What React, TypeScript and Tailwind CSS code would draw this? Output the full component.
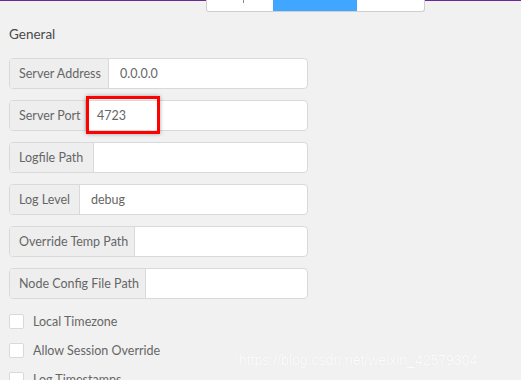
import React from "react";

const rows: { label: string; w: string; value: string }[] = [
  { label: "Server Address", w: "w-[99px]", value: "0.0.0.0" },
  { label: "Server Port", w: "w-[76px]", value: "4723" },
  { label: "Logfile Path", w: "w-[84px]", value: "" },
  { label: "Log Level", w: "w-[70px]", value: "debug" },
  { label: "Override Temp Path", w: "w-[125px]", value: "" },
  { label: "Node Config File Path", w: "w-[136px]", value: "" },
];

const checks = ["Local Timezone", "Allow Session Override", "Log Timestamps"];

export default function App() {
  return (
    <div
      className="relative w-[521px] h-[380px] overflow-hidden bg-[#f1f1f1] text-[#555]"
      style={{ fontFamily: 'Lato, "Open Sans", sans-serif' }}
    >
      <div className="flex h-[12px]">
        <div className="w-[206px] border-t border-[#6b2b96]" />
        <div className="flex w-[219px] h-[12px] bg-white border border-t-0 border-[#cfcfcf] rounded-b-[3px] overflow-hidden">
          <div className="relative w-[66px]">
            <div className="absolute left-[36px] top-0 w-px h-[3px] bg-[#888]" />
          </div>
          <div className="w-[84px] bg-[#41a6ff]" />
          <div className="flex-1" />
        </div>
        <div className="flex-1 border-t border-[#6b2b96]" />
      </div>

      <div className="pl-[9px]">
        <div className="mt-[12px] h-[18px] leading-[18px] pt-[1px] text-[13.5px] text-[#4a4a4a]">General</div>
        <div className="mt-[16px] flex flex-col gap-[11px]">
          {rows.map((r) => (
            <div
              key={r.label}
              className="flex w-[299px] h-[31px] rounded-[4px] border border-[#d9d9d9] bg-white overflow-hidden text-[12.5px]"
            >
              <div
                className={`${r.w} shrink-0 flex items-center pt-[2px] pl-[9px] bg-[#eeeeee] border-r border-[#d9d9d9] text-[#666]`}
              >
                {r.label}
              </div>
              <div className="flex-1 flex items-center pt-[2px] pl-[11px] text-[#666]">{r.value}</div>
            </div>
          ))}
        </div>
        <div className="mt-[15px] flex flex-col gap-[14px]">
          {checks.map((c) => (
            <div key={c} className="flex items-center h-[15px] text-[12.5px] text-[#666]">
              <div className="w-[15px] h-[15px] bg-white border border-[#d9d9d9] rounded-[2px]" />
              <span className="ml-[9px] pt-[1px]">{c}</span>
            </div>
          ))}
        </div>
      </div>

      <div className="absolute left-[86px] top-[96px] w-[74px] h-[38px] border-[3px] border-[#ff0000] shadow-[0_0_4px_rgba(0,0,0,0.35)]" />

      <div
        className="absolute left-[239px] top-[351px] text-[14px] leading-[18px] text-[#fbfbfb]"
        style={{ fontFamily: '"Liberation Sans", Arial, sans-serif', textShadow: "0 0 1px rgba(0,0,0,0.07)" }}
      >
        https://blog.csdn.net/weixin_42579304
      </div>
    </div>
  );
}
